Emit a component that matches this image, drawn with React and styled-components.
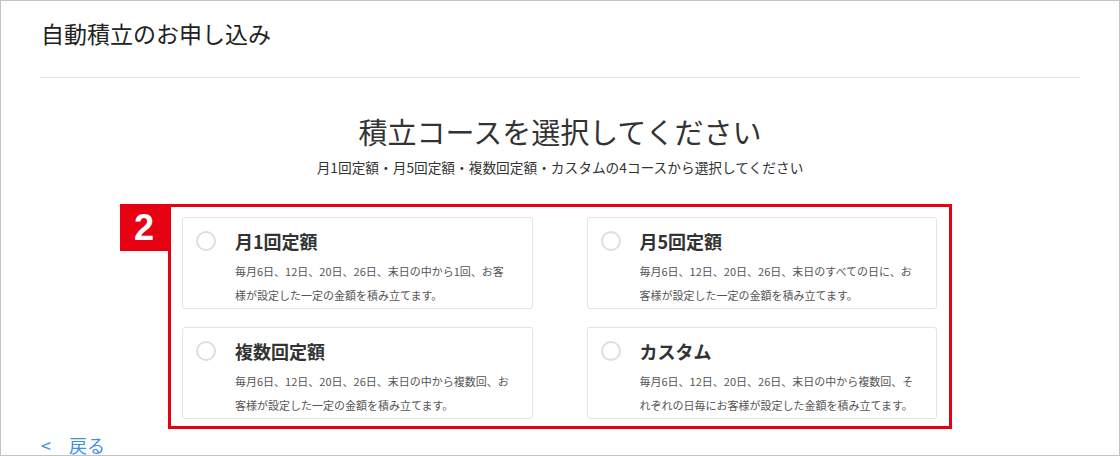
import React from 'react'
import styled, { createGlobalStyle } from 'styled-components'

const GlobalStyle = createGlobalStyle`
  html, body {
    margin: 0;
    padding: 0;
    background: #fff;
  }
  body {
    font-family: "Noto Sans CJK JP", "Noto Sans", sans-serif;
    color: #333;
  }
  * {
    box-sizing: border-box;
  }
`;

const Frame = styled.div`
  width: 1120px;
  height: 456px;
  border: 1px solid #c4c4c4;
  padding: 0 39px;
  overflow: hidden;
`;

const Header = styled.header`
  padding: 16px 0 28px 1px;
  border-bottom: 1px solid #e2e2e2;
`;

const PageTitle = styled.h1`
  margin: 0;
  font-size: 23px;
  line-height: 32px;
  font-weight: 400;
  color: #222;
`;

const Intro = styled.div`
  margin-top: 33px;
  text-align: center;
`;

const Heading = styled.h2`
  margin: 0;
  font-size: 29px;
  line-height: 40px;
  font-weight: 400;
  color: #333;
`;

const Lead = styled.p`
  margin: 6px 0 0;
  font-size: 13.7px;
  line-height: 21px;
  color: #333;
`;

const Highlight = styled.div`
  position: relative;
  width: 784px;
  margin: 26px auto 0;
  padding: 10px 12px 7px 11px;
  border: 3px solid #e60012;
`;

const Badge = styled.span`
  position: absolute;
  top: -3px;
  left: -51px;
  width: 48px;
  height: 47px;
  display: flex;
  align-items: center;
  justify-content: center;
  background: #e60012;
  color: #fff;
  font-family: "Liberation Sans", Arial, sans-serif;
  font-weight: 700;
  font-size: 36px;
`;

const CourseGrid = styled.div`
  display: grid;
  grid-template-columns: 1fr 1fr;
  column-gap: 54px;
  row-gap: 18px;
`;

const Card = styled.label`
  display: flex;
  gap: 19px;
  padding: 11px 14px 1px 13px;
  border: 1px solid #e3e3e3;
  border-radius: 3px;
  background: #fff;
  cursor: pointer;
`;

const Radio = styled.span`
  flex: none;
  width: 20px;
  height: 20px;
  margin-top: 2px;
  border: 2px solid #dedede;
  border-radius: 50%;
`;

const CardBody = styled.div`
  display: flex;
  flex-direction: column;
  gap: 6px;
`;

const CardTitle = styled.div`
  font-size: 18px;
  line-height: 24px;
  font-weight: 700;
  color: #333;
`;

const CardText = styled.p`
  margin: 0;
  font-size: 11px;
  line-height: 24px;
  color: #555;
  white-space: nowrap;
`;

const BackLink = styled.a`
  display: inline-flex;
  align-items: center;
  margin: 6px 0 0 1px;
  font-size: 18px;
  line-height: 20px;
  color: #3d8ee6;
  text-decoration: none;
`;

const Chevron = styled.span`
  margin-right: 18px;
`;

const courses = [
  {
    title: '月1回定額',
    lines: ['毎月6日、12日、20日、26日、末日の中から1回、お客', '様が設定した一定の金額を積み立てます。'],
  },
  {
    title: '月5回定額',
    lines: ['毎月6日、12日、20日、26日、末日のすべての日に、お', '客様が設定した一定の金額を積み立てます。'],
  },
  {
    title: '複数回定額',
    lines: ['毎月6日、12日、20日、26日、末日の中から複数回、お', '客様が設定した一定の金額を積み立てます。'],
  },
  {
    title: 'カスタム',
    lines: ['毎月6日、12日、20日、26日、末日の中から複数回、そ', 'れぞれの日毎にお客様が設定した金額を積み立てます。'],
  },
]

const App = () => {
  return (
    <>
      <GlobalStyle />
      <Frame>
        <Header>
          <PageTitle>自動積立のお申し込み</PageTitle>
        </Header>
        <Intro>
          <Heading>積立コースを選択してください</Heading>
          <Lead>月1回定額・月5回定額・複数回定額・カスタムの4コースから選択してください</Lead>
        </Intro>
        <Highlight>
          <Badge>2</Badge>
          <CourseGrid>
            {courses.map((c) => (
              <Card key={c.title}>
                <Radio />
                <CardBody>
                  <CardTitle>{c.title}</CardTitle>
                  <CardText>
                    {c.lines[0]}
                    <br />
                    {c.lines[1]}
                  </CardText>
                </CardBody>
              </Card>
            ))}
          </CourseGrid>
        </Highlight>
        <BackLink href="#">
          <Chevron>&lt;</Chevron>戻る
        </BackLink>
      </Frame>
    </>
  )
}

export default App
